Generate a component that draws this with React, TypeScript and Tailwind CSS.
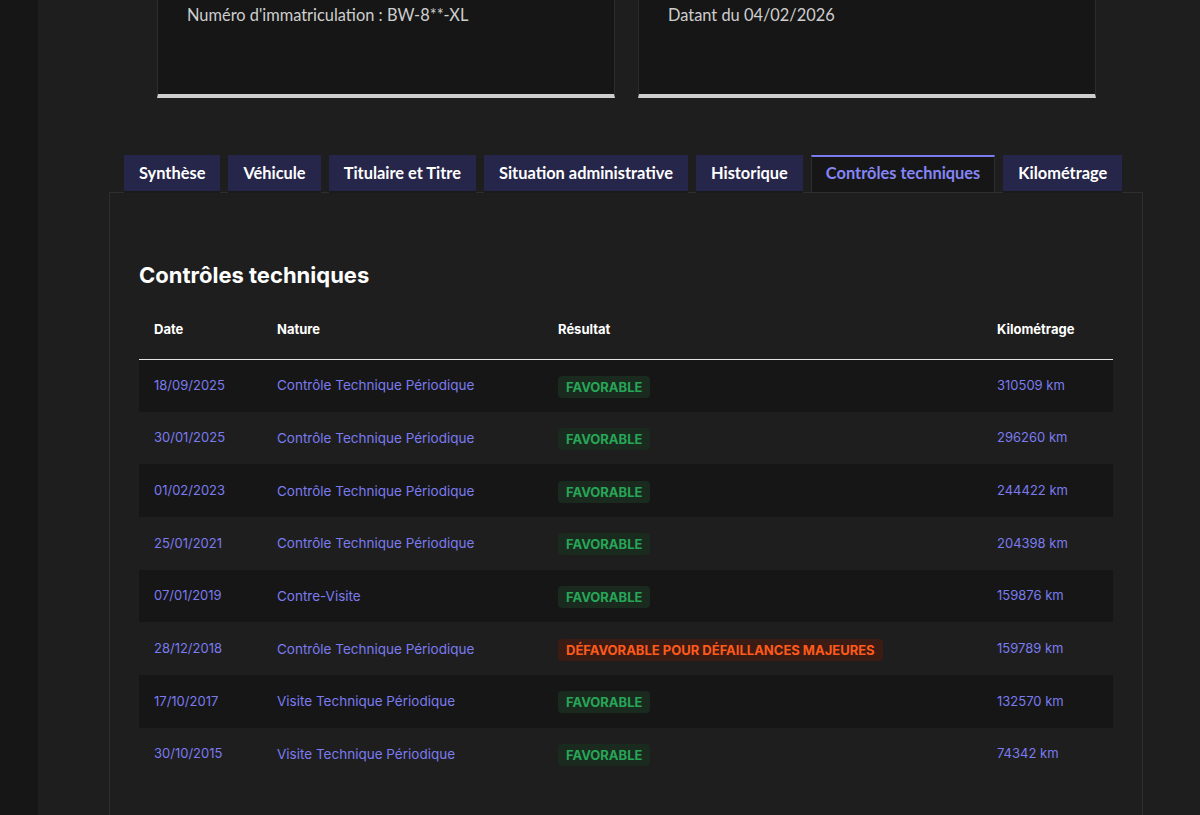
import React from "react";

type Row = {
  date: string;
  nature: string;
  result: "ok" | "ko";
  label: string;
  km: string;
};

const rows: Row[] = [
  { date: "18/09/2025", nature: "Contrôle Technique Périodique", result: "ok", label: "Favorable", km: "310509 km" },
  { date: "30/01/2025", nature: "Contrôle Technique Périodique", result: "ok", label: "Favorable", km: "296260 km" },
  { date: "01/02/2023", nature: "Contrôle Technique Périodique", result: "ok", label: "Favorable", km: "244422 km" },
  { date: "25/01/2021", nature: "Contrôle Technique Périodique", result: "ok", label: "Favorable", km: "204398 km" },
  { date: "07/01/2019", nature: "Contre-Visite", result: "ok", label: "Favorable", km: "159876 km" },
  { date: "28/12/2018", nature: "Contrôle Technique Périodique", result: "ko", label: "Défavorable pour défaillances majeures", km: "159789 km" },
  { date: "17/10/2017", nature: "Visite Technique Périodique", result: "ok", label: "Favorable", km: "132570 km" },
  { date: "30/10/2015", nature: "Visite Technique Périodique", result: "ok", label: "Favorable", km: "74342 km" },
];

const tabs = [
  "Synthèse",
  "Véhicule",
  "Titulaire et Titre",
  "Situation administrative",
  "Historique",
  "Contrôles techniques",
  "Kilométrage",
];

const ACTIVE = "Contrôles techniques";

const Badge: React.FC<{ row: Row }> = ({ row }) =>
  row.result === "ok" ? (
    <span className="inline-block rounded-[4px] bg-[#1a2a1e] px-2 py-[3px] text-[13px] font-bold uppercase leading-4 text-[#27a658]">
      {row.label}
    </span>
  ) : (
    <span className="inline-block rounded-[4px] bg-[#3a1c14] px-2 py-[3px] text-[13px] font-bold uppercase leading-4 text-[#ff5a1a]">
      {row.label}
    </span>
  );

const App: React.FC = () => {
  return (
    <div className="flex min-h-[815px] bg-[#1e1e1e] font-['Lato',sans-serif]">
      {/* side strip */}
      <div className="w-[38px] shrink-0 bg-[#161616]" />

      <div className="flex-1">
        {/* Info cards */}
        <div className="ml-[119px] flex w-[939px] gap-[23px]">
          <div className="h-[98px] w-[458px] border-x border-[#2c2c2c] border-b-4 border-b-[#cecece] bg-[#161616] px-[29px] pt-[3px] text-[16.4px] text-[#cecece]">
            Numéro d'immatriculation : BW-8**-XL
          </div>
          <div className="h-[98px] w-[458px] border-x border-[#2c2c2c] border-b-4 border-b-[#cecece] bg-[#161616] px-[29px] pt-[3px] text-[16.4px] text-[#cecece]">
            Datant du 04/02/2026
          </div>
        </div>

        {/* Tabs */}
        <div className="ml-[71px] mt-[57px] w-[1034px]">
          <div className="flex gap-[8px] pl-[15px]">
            {tabs.map((t) =>
              t === ACTIVE ? (
                <div
                  key={t}
                  className="h-[37px] border-t-2 border-x border-t-[#7b7bf0] border-x-[#2c2c2c] bg-[#161616] px-[14px] pt-[4px] text-[16.4px] font-bold text-[#8585f6]"
                >
                  {t}
                </div>
              ) : (
                <div
                  key={t}
                  className="h-[36px] bg-[#26264a] px-[15px] pt-[6px] text-[16.4px] font-bold text-white shadow-[0_2px_0_#1a1a1a]"
                >
                  {t}
                </div>
              )
            )}
          </div>

          {/* Panel */}
          <div className="min-h-[640px] border border-[#2e2e2e] bg-[#1e1e1e] px-[29px] pt-[68px] font-['Inter',sans-serif]">
            <h2 className="text-[22px] font-bold leading-7 text-white">Contrôles techniques</h2>

            <table className="mt-[17px] w-full border-collapse text-left">
              <thead>
                <tr className="h-[53px] border-b border-[#e5e5e5]">
                  <th className="w-[123px] pb-[6px] pl-[15px] text-[13px] font-bold text-white">Date</th>
                  <th className="w-[281px] pb-[6px] pl-[15px] text-[13px] font-bold text-white">Nature</th>
                  <th className="w-[439px] pb-[6px] pl-[15px] text-[13px] font-bold text-white">Résultat</th>
                  <th className="pb-[6px] pl-[15px] text-[13px] font-bold text-white">Kilométrage</th>
                </tr>
              </thead>
              <tbody>
                {rows.map((r, i) => (
                  <tr key={r.date} className={i % 2 === 0 ? "h-[52.7px] bg-[#161616]" : "h-[52.7px] bg-[#1e1e1e]"}>
                    <td className="pl-[15px] text-[13px] text-[#7b7bf0]">{r.date}</td>
                    <td className="pl-[15px] text-[13.5px] text-[#7b7bf0]">{r.nature}</td>
                    <td className="pl-[15px]">
                      <Badge row={r} />
                    </td>
                    <td className="pl-[15px] text-[13px] text-[#7b7bf0]">{r.km}</td>
                  </tr>
                ))}
              </tbody>
            </table>
          </div>
        </div>
      </div>
    </div>
  );
};

export default App;
